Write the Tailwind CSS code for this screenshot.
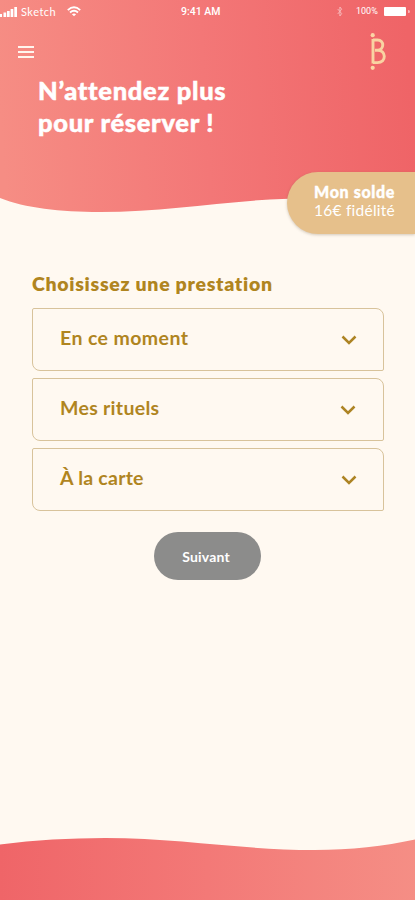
<!DOCTYPE html>
<html lang="fr">
<head>
<meta charset="utf-8">
<meta name="viewport" content="width=device-width, initial-scale=1">
<title>Réserver</title>
<script src="https://cdn.jsdelivr.net/npm/@tailwindcss/browser@4"></script>
</head>
<body class="bg-[#fff9f1] font-['Lato',sans-serif]">
<div class="relative flex h-[900px] w-[415px] flex-col overflow-hidden">
  <header class="relative h-[213px] shrink-0 text-white">
    <svg class="absolute inset-0" width="415" height="213" viewBox="0 0 415 213">
      <defs><linearGradient id="top" gradientUnits="userSpaceOnUse" x1="0" y1="110" x2="410" y2="85"><stop offset="0" stop-color="#f68d84"/><stop offset=".5" stop-color="#f37777"/><stop offset="1" stop-color="#ef6467"/></linearGradient></defs>
      <path fill="url(#top)" d="M0 0H415V205C370 200 320 197 270 199.500C210 203 160 212 100 212C60 212 25 208 0 198Z"/>
    </svg>
    <div class="relative flex h-6 items-center pb-px text-[10px] leading-none">
      <svg width="18" height="12" viewBox="0 0 18 12" fill="#fff"><path d="M0 9h2v3H0zM3.500 7.500h2.700V12H3.500zM7 6h2.700v6H7zM10.600 4h2.700v8h-2.700zM14.300 2H17v10h-2.700z" transform="translate(0 -1)"/></svg>
      <span class="ml-[3px] w-[35px] pb-px text-[11px] tracking-[0.5px]">Sketch</span>
      <svg class="ml-[11px]" width="14" height="11" viewBox="0 0 14 11" fill="none" stroke="#fff" stroke-width="1.900"><path d="M.8 4.100Q7-1.400 13.200 4.100M3 6.500Q7 3 11 6.500"/><path d="M7 10.300L4.900 8.200Q7 6.600 9.100 8.200Z" fill="#fff" stroke="none"/></svg>
      <span class="ml-[100px] whitespace-nowrap pt-px font-['Roboto',sans-serif] text-[10.500px] font-medium">9:41 AM</span>
      <div class="ml-auto flex items-center pr-[5px]">
        <svg class="opacity-55" width="6" height="11" viewBox="0 0 6 11" fill="none" stroke="#fff" stroke-width=".9"><path d="M.7 3l4 4.600L2.900 10V1l1.800 2.200L.7 8"/></svg>
        <span class="ml-[13px] w-[24px] whitespace-nowrap font-['Roboto',sans-serif] text-[9px]">100%</span>
        <span class="ml-1 h-[9px] w-[22px] rounded-[1px] bg-white"></span>
        <span class="ml-[2px] h-[3px] w-[2px] rounded-r bg-white/50"></span>
      </div>
    </div>
    <div class="relative flex items-start justify-between pl-[18px] pr-[28px] pt-[8px]">
      <button class="mt-[14px] flex w-[16px] flex-col gap-[3px]" aria-label="Menu">
        <span class="h-[2px] w-full bg-[#fff5ee]"></span><span class="h-[2px] w-full bg-[#fff5ee]"></span><span class="h-[2px] w-full bg-[#fff5ee]"></span>
      </button>
      <svg width="18" height="40" viewBox="0 0 18 40" fill="none" stroke="#f9d3a2"><path stroke-width="2.900" d="M4 7V31.500M4 8H8.500C15.500 8 15.500 18.200 8.500 18.200H6M8.500 18.200C17.300 18.200 17.800 30.600 8.500 30.600H4"/><g fill="#fbd5a5" stroke="none"><circle cx="3.700" cy="3.200" r="2.100"/><circle cx="3.700" cy="35.800" r="2.100"/></g></svg>
    </div>
    <h1 class="relative mt-[2px] whitespace-nowrap pl-[38px] text-[25.500px] font-black leading-[32px] tracking-[0.7px] [-webkit-text-stroke:0.5px_white]">N’attendez plus<br>pour réserver !</h1>
  </header>
  <aside class="absolute right-0 top-[172px] flex h-[62px] w-[128px] flex-col justify-center rounded-l-full bg-[#e6c08b] pb-[4px] pl-[27px] text-[15.500px] leading-[19px] text-white shadow-[0_1px_3px_rgba(110,90,60,0.3)]">
    <strong class="whitespace-nowrap text-[16px] font-black tracking-[0.65px] [-webkit-text-stroke:0.4px_white]">Mon solde</strong>
    <span class="whitespace-nowrap tracking-[0.25px]">16€ fidélité</span>
  </aside>
  <main class="flex flex-col px-8 pt-[59px] text-[#b0851f]">
    <h2 class="whitespace-nowrap text-[19.500px] font-extrabold leading-[24px] tracking-[0.7px]">Choisissez une prestation</h2>
    <div class="mt-[12px] flex flex-col gap-[7px]">
      <button class="flex h-[63px] w-[352px] items-center justify-between rounded-[2px_8px_2px_8px] border border-[#d8c39b] pl-[27px] pr-[26px] text-[19.500px] font-bold">
        <span class="pb-[3px] tracking-[0.4px]">En ce moment</span>
        <svg width="16" height="12" viewBox="0 0 16 12" fill="none" stroke="#ad8424" stroke-width="2.500"><path d="M1.500 2.500L8 9L14.500 2.500"/></svg>
      </button>
      <button class="flex h-[63px] w-[352px] items-center justify-between rounded-[2px_8px_2px_8px] border border-[#d8c39b] pl-[27px] pr-[27px] text-[19.500px] font-bold">
        <span class="pb-[3px] tracking-[0.3px]">Mes rituels</span>
        <svg width="16" height="12" viewBox="0 0 16 12" fill="none" stroke="#ad8424" stroke-width="2.500"><path d="M1.500 2.500L8 9L14.500 2.500"/></svg>
      </button>
      <button class="flex h-[63px] w-[352px] items-center justify-between rounded-[2px_8px_2px_8px] border border-[#d8c39b] pl-[27px] pr-[26px] text-[19.500px] font-bold">
        <span class="pb-[3px] tracking-[0.25px]">À la carte</span>
        <svg width="16" height="12" viewBox="0 0 16 12" fill="none" stroke="#ad8424" stroke-width="2.500"><path d="M1.500 2.500L8 9L14.500 2.500"/></svg>
      </button>
    </div>
    <button class="mt-[21px] h-[48px] w-[107px] self-center rounded-full bg-[#8c8c8b] pr-[3px] text-[14px] font-bold tracking-[0.2px] text-white">Suivant</button>
  </main>
  <footer class="mt-auto h-[64px]">
    <svg width="415" height="64" viewBox="0 0 415 64">
      <defs><linearGradient id="bottom"><stop offset="0" stop-color="#ef6568"/><stop offset=".5" stop-color="#f37977"/><stop offset="1" stop-color="#f58e85"/></linearGradient></defs>
      <path fill="url(#bottom)" d="M0 8.500C35 4 70 2 105 2C180 2 240 14 315 14C350 14 385 10 415 3.500V64H0Z"/>
    </svg>
  </footer>
</div>
</body>
</html>
